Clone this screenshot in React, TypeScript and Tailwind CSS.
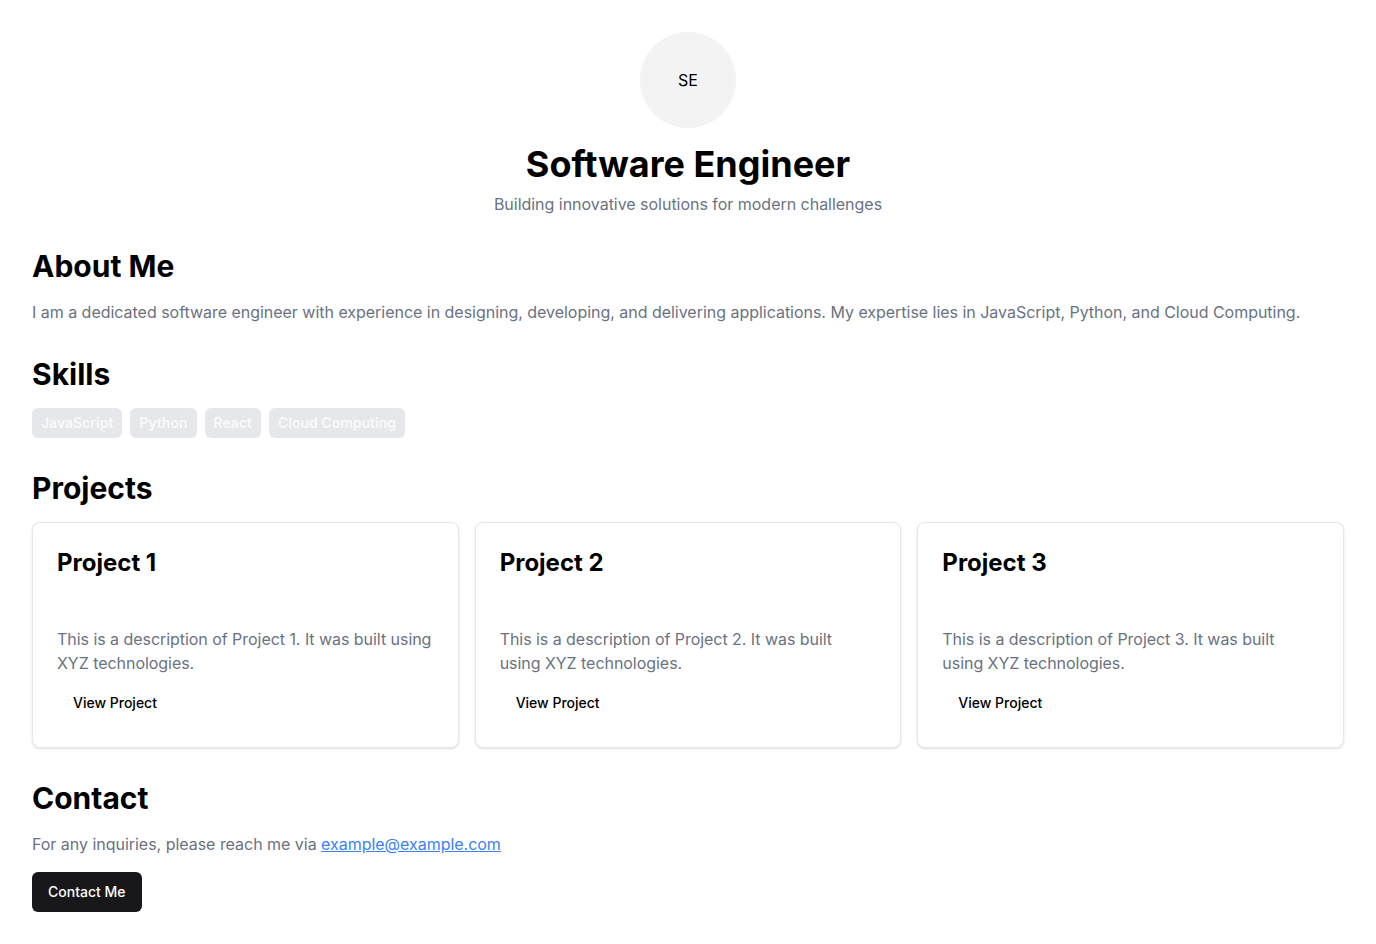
import React from 'react';

const skills = ['JavaScript', 'Python', 'React', 'Cloud Computing'];

const projects = [
  { id: 1, title: 'Project 1', desc: 'This is a description of Project 1. It was built using XYZ technologies.' },
  { id: 2, title: 'Project 2', desc: 'This is a description of Project 2. It was built using XYZ technologies.' },
  { id: 3, title: 'Project 3', desc: 'This is a description of Project 3. It was built using XYZ technologies.' },
];

export default function App() {
  return (
    <div className="min-h-screen bg-white p-8 text-black font-['Inter',sans-serif]">
      {/* Header */}
      <header className="flex flex-col items-center text-center mb-8">
        <div className="w-24 h-24 rounded-full bg-[#f3f3f3] flex items-center justify-center text-base text-black">
          SE
        </div>
        <h1 className="mt-4 text-4xl font-bold leading-10">Software Engineer</h1>
        <p className="mt-2 text-base text-gray-500 tracking-[-0.025px]">Building innovative solutions for modern challenges</p>
      </header>

      {/* About */}
      <section className="mb-8">
        <h2 className="text-3xl font-bold mb-4">About Me</h2>
        <p className="text-base text-gray-500 tracking-[-0.025px]">
          I am a dedicated software engineer with experience in designing, developing, and delivering applications. My expertise lies in JavaScript, Python, and Cloud Computing.
        </p>
      </section>

      {/* Skills */}
      <section className="mb-8">
        <h2 className="text-3xl font-bold mb-4">Skills</h2>
        <div className="flex flex-wrap gap-2">
          {skills.map((s) => (
            <span
              key={s}
              className="px-2 py-1 text-sm font-semibold text-gray-50 bg-gray-200 border border-transparent rounded-md"
            >
              {s}
            </span>
          ))}
        </div>
      </section>

      {/* Projects */}
      <section className="mb-8">
        <h2 className="text-3xl font-bold mb-4">Projects</h2>
        <div className="grid grid-cols-3 gap-4">
          {projects.map((p) => (
            <div key={p.id} className="border border-gray-200 rounded-lg bg-white shadow-sm">
              <div className="p-6">
                <h3 className="text-2xl font-bold">{p.title}</h3>
              </div>
              <div className="px-6 pt-6">
                <p className="text-base text-gray-500 tracking-[-0.045px]">{p.desc}</p>
              </div>
              <div className="px-6 pb-6 pt-2">
                <button className="h-10 px-4 text-sm font-medium text-black rounded-md">View Project</button>
              </div>
            </div>
          ))}
        </div>
      </section>

      {/* Contact */}
      <section>
        <h2 className="text-3xl font-bold mb-4">Contact</h2>
        <p className="text-base text-gray-500 tracking-[-0.025px] mb-4">
          For any inquiries, please reach me via{' '}
          <a href="mailto:example@example.com" className="text-[#3b82f6] underline">example@example.com</a>
        </p>
        <button className="h-10 px-4 text-sm font-medium text-white bg-[#18181b] rounded-md">Contact Me</button>
      </section>
    </div>
  );
}
